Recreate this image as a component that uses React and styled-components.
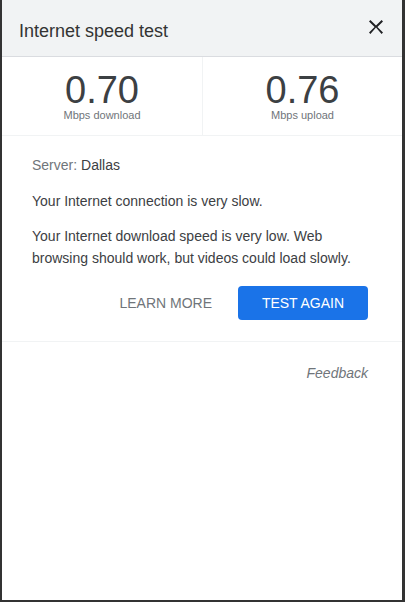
import React from 'react';
import styled, { createGlobalStyle } from 'styled-components';

const GlobalStyle = createGlobalStyle`
  html, body {
    margin: 0;
    padding: 0;
    background: #333333;
  }
  body {
    font-family: 'Liberation Sans', Arial, sans-serif;
  }
`;

const speeds = [
  { value: '0.70', label: 'Mbps download' },
  { value: '0.76', label: 'Mbps upload' }
];

function CloseIcon() {
  return (
    <svg width='24' height='24' viewBox='0 0 24 24' aria-hidden='true'>
      <path
        fill='#202124'
        d='M19 6.41L17.59 5 12 10.59 6.41 5 5 6.41 10.59 12 5 17.59 6.41 19 12 12.41 17.59 19 19 17.59 13.41 12z'
      />
    </svg>
  );
}

export default function App() {
  return (
    <Page>
      <GlobalStyle />
      <Card>
        <Header>
          <Title>Internet speed test</Title>
          <CloseButton role='button' tabIndex={0} aria-label='Close'>
            <CloseIcon />
          </CloseButton>
        </Header>
        <SpeedRow>
          {speeds.map(s => (
            <SpeedCell key={s.label}>
              <SpeedValue>{s.value}</SpeedValue>
              <SpeedLabel>{s.label}</SpeedLabel>
            </SpeedCell>
          ))}
        </SpeedRow>
        <Body>
          <ServerLine>
            <Muted>Server: </Muted>Dallas
          </ServerLine>
          <Summary>Your Internet connection is very slow.</Summary>
          <Detail>
            Your Internet download speed is very low. Web browsing should work, but videos could load slowly.
          </Detail>
          <Actions>
            <TextButton>Learn more</TextButton>
            <PrimaryButton>Test again</PrimaryButton>
          </Actions>
        </Body>
        <Footer>
          <Feedback>Feedback</Feedback>
        </Footer>
      </Card>
    </Page>
  );
}

const Page = styled.div`
  box-sizing: border-box;
  height: 602px;
  padding: 0 3px 2px 2px;
`;

const Card = styled.div`
  height: 100%;
  background: #fff;
  display: flex;
  flex-direction: column;
`;

const Header = styled.div`
  box-sizing: border-box;
  height: 57px;
  background: #f1f3f4;
  border-bottom: 1px solid #dadce0;
  display: flex;
  align-items: flex-start;
  justify-content: space-between;
  padding: 0 14px 0 17px;
`;

const Title = styled.span`
  margin-top: 21px;
  font-size: 18px;
  line-height: 20px;
  color: #333;
`;

const CloseButton = styled.span`
  margin-top: 15px;
  display: flex;
  cursor: pointer;
`;

const SpeedRow = styled.div`
  display: grid;
  grid-template-columns: 1fr 1fr;
  height: 79px;
  box-sizing: border-box;
  border-bottom: 1px solid #f1f3f4;
`;

const SpeedCell = styled.div`
  display: flex;
  flex-direction: column;
  align-items: center;
  padding-top: 16px;
  color: #3c4043;

  & + & {
    border-left: 1px solid #f1f3f4;
  }
`;

const SpeedValue = styled.div`
  font-size: 38px;
  line-height: 34px;
`;

const SpeedLabel = styled.div`
  font-size: 11px;
  line-height: 14px;
  margin-top: 1px;
  color: #70757a;
`;

const Body = styled.div`
  padding: 19px 34px 21px 30px;
  border-bottom: 1px solid #f1f3f4;
  color: #3c4043;
  font-size: 14px;
`;

const ServerLine = styled.div`
  line-height: 20px;
`;

const Muted = styled.span`
  color: #70757a;
`;

const Summary = styled.div`
  margin-top: 16px;
  line-height: 20px;
`;

const Detail = styled.div`
  margin-top: 14px;
  line-height: 22px;
`;

const Actions = styled.div`
  margin-top: 17px;
  display: flex;
  justify-content: flex-end;
  align-items: center;
  gap: 26px;
`;

const TextButton = styled.span`
  text-transform: uppercase;
  color: #70757a;
  font-size: 14px;
  cursor: pointer;
`;

const PrimaryButton = styled.span`
  box-sizing: border-box;
  width: 130px;
  height: 34px;
  display: flex;
  align-items: center;
  justify-content: center;
  background: #1a73e8;
  border-radius: 4px;
  color: #fff;
  text-transform: uppercase;
  font-size: 14px;
  cursor: pointer;
`;

const Footer = styled.div`
  display: flex;
  justify-content: flex-end;
  padding: 21px 34px 0 0;
`;

const Feedback = styled.span`
  font-style: italic;
  font-size: 14px;
  line-height: 20px;
  color: #70757a;
`;
